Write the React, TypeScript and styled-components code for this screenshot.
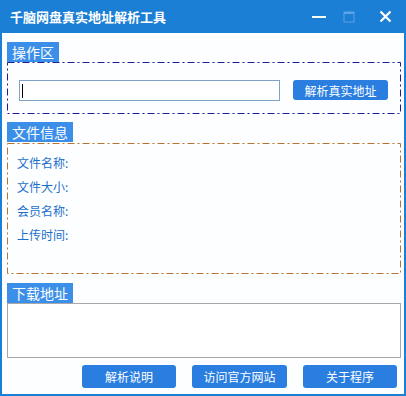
import React from "react";
import styled, { createGlobalStyle } from "styled-components";

const Global = createGlobalStyle`
  html, body { margin: 0; padding: 0; background: #ffffff; }
  body { font-family: "Noto Sans CJK SC", "Noto Sans", sans-serif; }
`;

const Window = styled.div`
  width: 406px;
  height: 396px;
  box-sizing: border-box;
  border: 2px solid #1b7fd6;
  border-top: none;
  background: #fdfeff;
  display: flex;
  flex-direction: column;
`;

const TitleBar = styled.div`
  height: 33px;
  margin: 0 -2px;
  background: #1b7fd6;
  display: flex;
  align-items: center;
  padding: 0 0 0 10px;
  flex-shrink: 0;
`;

const Title = styled.div`
  flex: 1;
  color: #ffffff;
  font-size: 13px;
  font-weight: bold;
  line-height: 33px;
`;

const Controls = styled.div`
  display: flex;
  align-items: center;
  height: 100%;
`;

const CtrlBtn = styled.div<{ $w: number }>`
  width: ${(p) => p.$w}px;
  height: 33px;
  display: flex;
  align-items: center;
  justify-content: center;
`;

const Body = styled.div`
  flex: 1;
  display: flex;
  flex-direction: column;
  padding: 9px 3px 0 5px;
`;

const Section = styled.div<{ $mt?: number }>`
  display: flex;
  flex-direction: column;
  align-items: flex-start;
  margin-top: ${(p) => p.$mt ?? 0}px;
`;

const Label = styled.div`
  background: #3c8fe8;
  color: #ffffff;
  font-size: 14px;
  line-height: 20px;
  height: 20px;
  padding: 0 5px;
`;

const DashBox = styled.div<{ $h: number; $mt?: number }>`
  align-self: stretch;
  box-sizing: border-box;
  height: ${(p) => p.$h}px;
  margin-top: ${(p) => p.$mt ?? 0}px;
  position: relative;
  display: flex;
`;

const DashSvg = styled.svg`
  position: absolute;
  inset: 0;
  width: 100%;
  height: 100%;
  pointer-events: none;
`;

const OpRow = styled.div`
  flex: 1;
  display: flex;
  align-items: flex-start;
  padding: 18px 13px 0 12px;
  gap: 13px;
`;

const FakeInput = styled.div`
  flex: 1;
  height: 21px;
  box-sizing: border-box;
  border: 1px solid #7ea2c8;
  background: #ffffff;
  display: flex;
  align-items: center;
  padding-left: 2px;
`;

const Caret = styled.span`
  width: 1px;
  height: 14px;
  background: #000000;
`;

const Btn = styled.div<{ $w: number; $h: number }>`
  width: ${(p) => p.$w}px;
  height: ${(p) => p.$h}px;
  background: #2a7ee0;
  color: #ffffff;
  font-size: 12px;
  border-radius: 3px;
  display: flex;
  align-items: center;
  justify-content: center;
  flex-shrink: 0;
`;

const InfoList = styled.div`
  display: flex;
  flex-direction: column;
  gap: 6px;
  padding: 11px 0 0 10px;
`;

const InfoItem = styled.div`
  color: #1a70cc;
  font-size: 12px;
  line-height: 18px;
`;

const TextArea = styled.div`
  align-self: stretch;
  height: 55px;
  box-sizing: border-box;
  border: 1px solid #a8a8a8;
  background: #ffffff;
`;

const Footer = styled.div`
  display: flex;
  justify-content: flex-end;
  gap: 16px;
  padding: 7px 0 0 0;
  margin-right: 4px;
`;

function Dashed({ color }: { color: string }) {
  return (
    <DashSvg preserveAspectRatio="none">
      <rect
        x="0.5"
        y="0.5"
        fill="none"
        stroke={color}
        strokeWidth="1"
        strokeDasharray="7 3 2 3"
        style={{ width: "calc(100% - 1px)", height: "calc(100% - 1px)" } as React.CSSProperties}
      />
    </DashSvg>
  );
}

export default function App() {
  return (
    <>
      <Global />
      <Window>
        <TitleBar>
          <Title>千脑网盘真实地址解析工具</Title>
          <Controls>
            <CtrlBtn $w={30}>
              <svg width="14" height="14" viewBox="0 0 14 14">
                <rect x="0" y="6" width="14" height="2" fill="#ffffff" />
              </svg>
            </CtrlBtn>
            <CtrlBtn $w={30}>
              <svg width="12" height="12" viewBox="0 0 12 12">
                <rect x="1" y="1" width="10" height="10" fill="none" stroke="#5aa3e6" strokeWidth="1" />
                <rect x="1" y="1" width="10" height="2" fill="#5aa3e6" />
              </svg>
            </CtrlBtn>
            <CtrlBtn $w={42}>
              <svg width="13" height="13" viewBox="0 0 13 13">
                <path d="M1.5 1.5 L11.5 11.5 M11.5 1.5 L1.5 11.5" stroke="#ffffff" strokeWidth="2.2" />
              </svg>
            </CtrlBtn>
          </Controls>
        </TitleBar>
        <Body>
          <Section>
            <Label>操作区</Label>
            <DashBox $h={52}>
              <Dashed color="#1c1c9c" />
              <OpRow>
                <FakeInput>
                  <Caret />
                </FakeInput>
                <Btn $w={95} $h={20}>解析真实地址</Btn>
              </OpRow>
            </DashBox>
          </Section>
          <Section $mt={8}>
            <Label>文件信息</Label>
            <DashBox $h={131} $mt={1}>
              <Dashed color="#bb7430" />
              <InfoList>
                <InfoItem>文件名称:</InfoItem>
                <InfoItem>文件大小:</InfoItem>
                <InfoItem>会员名称:</InfoItem>
                <InfoItem>上传时间:</InfoItem>
              </InfoList>
            </DashBox>
          </Section>
          <Section $mt={9}>
            <Label>下载地址</Label>
            <TextArea />
          </Section>
          <Footer>
            <Btn $w={94} $h={23}>解析说明</Btn>
            <Btn $w={95} $h={23}>访问官方网站</Btn>
            <Btn $w={94} $h={23}>关于程序</Btn>
          </Footer>
        </Body>
      </Window>
    </>
  );
}
